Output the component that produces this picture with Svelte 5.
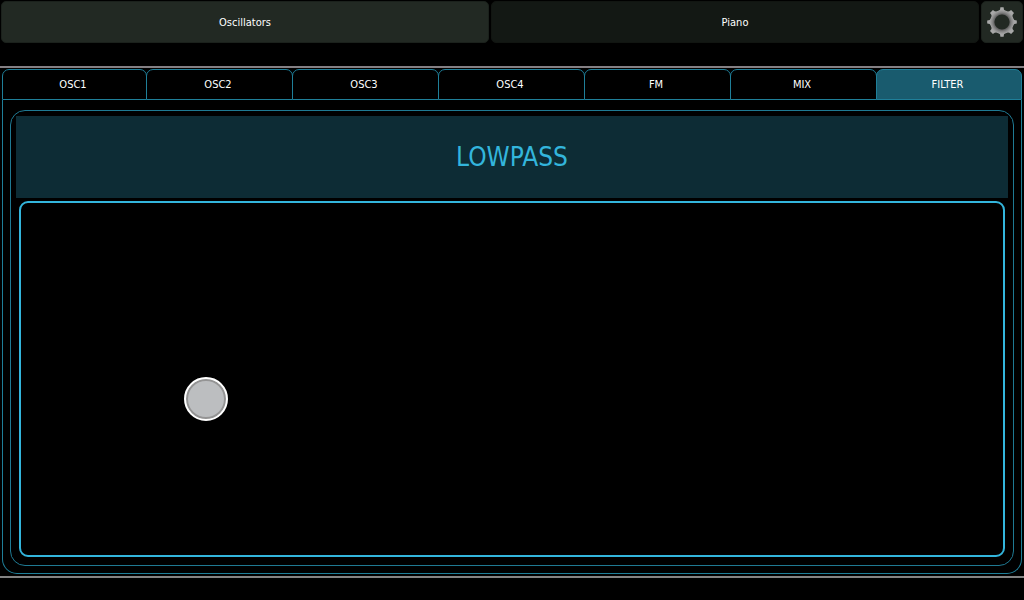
<script>
  const views = ['Oscillators', 'Piano'];
  const tabs = ['OSC1', 'OSC2', 'OSC3', 'OSC4', 'FM', 'MIX', 'FILTER'];
  let view = $state('Oscillators');
  let tab = $state('FILTER');
  let modes = ['LOWPASS', 'HIGHPASS', 'BANDPASS'];
  let mode = $state(0);
  let pos = $state({ x: 18.8, y: 55.7 });
  let dragging = false;

  function move(e) {
    if (!dragging) return;
    const r = e.currentTarget.getBoundingClientRect();
    const clamp = (v) => Math.min(100, Math.max(0, v));
    pos = {
      x: clamp(((e.clientX - r.left) / r.width) * 100),
      y: clamp(((e.clientY - r.top) / r.height) * 100)
    };
  }
  function start(e) {
    dragging = true;
    move(e);
  }
</script>

<svelte:window onpointerup={() => (dragging = false)} />

<div class="app">
  <header>
    {#each views as name}
      <button class="view" class:active={view === name} onclick={() => (view = name)}>{name}</button>
    {/each}
    <button class="settings" aria-label="Settings">
      <svg viewBox="0 0 32 32" width="32" height="32" aria-hidden="true">
        <defs>
          <radialGradient id="metal" gradientUnits="userSpaceOnUse" cx="16" cy="16" r="15">
            <stop offset="0.5" stop-color="#5c5c5c" />
            <stop offset="0.64" stop-color="#858585" />
            <stop offset="0.8" stop-color="#a6a6a6" />
            <stop offset="1" stop-color="#aaaaaa" />
          </radialGradient>
        </defs>
        <path fill="url(#metal)" fill-rule="evenodd" d="M12.8 4.5 L14 3.7 L14.4 1.2 H17.6 L18 3.7 L19.2 4.5 L21.9 5.6 L23.3 5.3 L25.1 4 L28 6.9 L26.7 8.7 L26.4 10.1 L27.5 12.8 L28.3 14 L30.8 14.4 V17.6 L28.3 18 L27.5 19.2 L26.4 21.9 L26.7 23.3 L28 25.1 L25.1 28 L23.3 26.7 L21.9 26.4 L19.2 27.5 L18 28.3 L17.6 30.8 H14.4 L14 28.3 L12.8 27.5 L10.1 26.4 L8.7 26.7 L6.9 28 L4 25.1 L5.3 23.3 L5.6 21.9 L4.5 19.2 L3.7 18 L1.2 17.6 V14.4 L3.7 14 L4.5 12.8 L5.6 10.1 L5.3 8.7 L4 6.9 L6.9 4 L8.7 5.3 L10.1 5.6 Z M16 8.4 A7.6 7.6 0 1 0 16 23.6 A7.6 7.6 0 1 0 16 8.4 Z" />
      </svg>
    </button>
  </header>

  <main>
    <div class="tabs" role="tablist">
      {#each tabs as name}
        <button role="tab" aria-selected={tab === name} class:selected={tab === name} onclick={() => (tab = name)}>{name}</button>
      {/each}
    </div>
    <div class="body">
      <section class="panel">
        <button class="mode" onclick={() => (mode = (mode + 1) % modes.length)}>{modes[mode]}</button>
        <div class="pad" role="application" aria-label="Filter pad" onpointerdown={start} onpointermove={move}>
          <button class="knob" aria-label="Filter position" style="left: {pos.x}%; top: {pos.y}%"></button>
        </div>
      </section>
    </div>
  </main>
</div>

<style>
  :global(body) {
    margin: 0;
    background: #000;
  }
  .app {
    box-sizing: border-box;
    display: flex;
    flex-direction: column;
    min-height: 100vh;
    padding-bottom: 22px;
    color: #fff;
    font-family: "DejaVu Sans Condensed", "DejaVu Sans", sans-serif;
  }
  button {
    box-sizing: border-box;
    margin: 0;
    padding: 0;
    border: 0;
    color: inherit;
    font: inherit;
    cursor: pointer;
  }
  header {
    display: flex;
    gap: 2px;
    padding: 1px 1px 23px;
    font-size: 11px;
  }
  header button {
    height: 42px;
    border: 1px solid #1b211c;
    border-radius: 5px;
    background: #222923;
  }
  .view {
    flex: 1;
  }
  .view:not(.active) {
    border-color: #111511;
    background: #131814;
  }
  .settings {
    display: flex;
    align-items: center;
    justify-content: center;
    width: 42px;
  }
  main {
    display: flex;
    flex: 1;
    flex-direction: column;
    padding: 1px 2px 2px;
    border-top: 2px solid #848084;
    border-bottom: 2px solid #848484;
  }
  .tabs {
    display: grid;
    grid-template-columns: 144fr repeat(6, 146fr);
    font-size: 11px;
  }
  .tabs button {
    height: 31px;
    margin-right: -1px;
    padding-right: 3px;
    border: 1px solid #1f7f99;
    border-radius: 7px 7px 0 0;
    background: #000;
  }
  .tabs button:last-child {
    margin-right: 0;
  }
  .tabs .selected {
    background: #195b6e;
  }
  .body {
    display: flex;
    flex: 1;
    padding: 10px 7px 7px;
    border: solid #1f7f99;
    border-width: 0 1px 1px;
    border-radius: 0 0 15px 15px;
  }
  .panel {
    display: flex;
    flex: 1;
    flex-direction: column;
    padding: 5px;
    border: 1px solid #1f7a93;
    border-radius: 15px;
  }
  .mode {
    height: 82px;
    background: #0d2c35;
    color: #33b5dc;
    font-size: 26px;
  }
  .pad {
    position: relative;
    flex: 1;
    margin: 3px;
    border: 2px solid #33b5dc;
    border-radius: 9px;
    touch-action: none;
  }
  .knob {
    position: absolute;
    width: 44px;
    height: 44px;
    border: 2px solid #fff;
    border-radius: 50%;
    background: #bcbec0;
    box-shadow: inset 0 0 0 2px #949494;
    transform: translate(-50%, -50%);
  }
</style>
